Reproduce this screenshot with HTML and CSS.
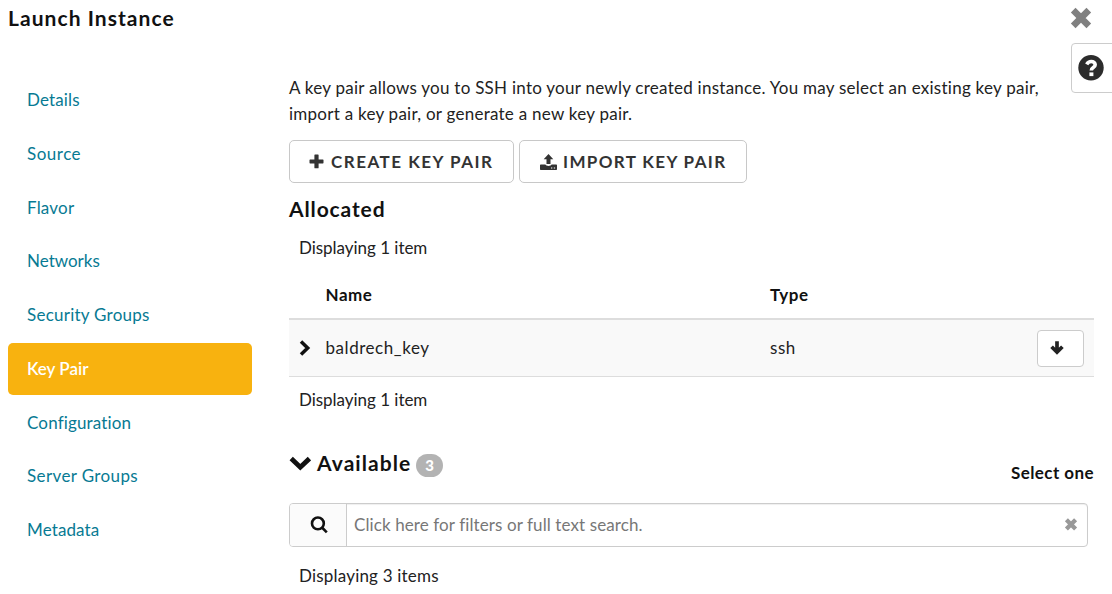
FILE: index.html
```html
<!DOCTYPE html>
<html lang="en">
<head>
<meta charset="utf-8">
<title>Launch Instance</title>
<link rel="stylesheet" href="styles.css">
</head>
<body>
<div class="wizard">
  <header class="header">
    <h1 class="title">Launch Instance</h1>
    <button class="close" aria-label="Close"><svg width="24" height="24" viewBox="0 0 24 24"><path d="M4.200 4.200 19.800 19.800M19.800 4.200 4.200 19.800"/></svg></button>
  </header>
  <div class="body">
    <nav class="steps">
      <a class="step s-details">Details</a>
      <a class="step s-source">Source</a>
      <a class="step s-flavor">Flavor</a>
      <a class="step">Networks</a>
      <a class="step s-security">Security Groups</a>
      <a class="step active">Key Pair</a>
      <a class="step s-config">Configuration</a>
      <a class="step s-server">Server Groups</a>
      <a class="step s-meta">Metadata</a>
    </nav>
    <main class="content">
      <p class="intro">A key pair allows you to SSH into your newly created instance. You may select an existing key pair,<br>import a key pair, or generate a new key pair.</p>
      <div class="actions">
        <button class="btn create"><svg width="15" height="15" viewBox="0 0 15 15"><path d="M6 .5h3q.6 0 .6.6v4.300h4.300q.6 0 .6.6v2.800q0 .6-.6.6H9.600v4.300q0 .6-.6.6H6q-.6 0-.6-.6V9.400H1.100q-.6 0-.6-.6V6q0-.6.6-.6h4.300V1.100q0-.6.6-.6z"/></svg><span>CREATE KEY PAIR</span></button>
        <button class="btn import"><svg width="17" height="16" viewBox="0 0 17 16"><path d="M8.500 0 13.300 5.200H10.500V9.900H6.500V5.200H3.700z"/><path fill-rule="evenodd" d="M.7 10.600H5.300Q6 12 8.500 12T11.700 10.600H16.300Q17 10.600 17 11.300V15.200Q17 15.900 16.300 15.900H.7Q0 15.900 0 15.200V11.300Q0 10.600.7 10.600zM11 13.400v1.200h1.300v-1.200zm2.800 0v1.200h1.300v-1.200z"/></svg><span>IMPORT KEY PAIR</span></button>
      </div>
      <h2 class="section">Allocated</h2>
      <p class="count">Displaying 1 item</p>
      <div class="table">
        <div class="row head"><span></span><span>Name</span><span>Type</span><span></span></div>
        <div class="row item">
          <svg class="chev" width="12" height="17" viewBox="0 0 12 17"><path d="M2 1.500 8.700 8 2 14.500"/></svg>
          <span class="key">baldrech_key</span><span class="key">ssh</span>
          <button class="down" aria-label="Move down"><svg width="14" height="14" viewBox="0 0 14 14"><path d="M7 .3V10.500M1.600 5.700 7 11.100 12.400 5.700"/></svg></button>
        </div>
      </div>
      <p class="count after">Displaying 1 item</p>
      <div class="available">
        <h2 class="avail-title"><svg width="22" height="16" viewBox="0 0 22 16"><path d="M2.200 3.600 11.300 12.200 20.400 3.600"/></svg><span>Available</span><span class="badge">3</span></h2>
        <span class="select">Select one</span>
      </div>
      <div class="search">
        <span class="lens"><svg width="18" height="18" viewBox="0 0 18 18"><circle cx="7.900" cy="7.400" r="5.900"/><path d="m12 11.500 4.800 4.800"/></svg></span>
        <span class="placeholder">Click here for filters or full text search.</span>
        <svg class="clear" width="14" height="14" viewBox="0 0 14 14"><path d="m2.400 1.800 9.200 9.200M11.600 1.800l-9.200 9.200"/></svg>
      </div>
      <p class="count last">Displaying 3 items</p>
    </main>
    <button class="help" aria-label="Help"><svg width="26" height="26" viewBox="0 0 26 26"><circle cx="13" cy="12.700" r="12.700"/><path d="M8.700 9.300Q10.300 6.500 13.200 6.500C15.500 6.500 17.200 7.900 17.200 9.800C17.200 12.800 13.300 12.400 13.300 15.500"/><rect x="11.400" y="17.400" width="4" height="3.700"/></svg></button>
  </div>
</div>
</body>
</html>
```
FILE: styles.css
```css
* { box-sizing: border-box; }
body {
  margin: 0;
  background: #fff;
  color: #222;
  font: 17px/26px Lato, "Open Sans", sans-serif;
  overflow: hidden;
}
h1, h2, p { margin: 0; }
button { font: inherit; color: inherit; padding: 0; background: #fff; }
svg { display: block; flex: none; }
.wizard { height: 594px; overflow: hidden; }

/* Header */
.header { display: flex; justify-content: space-between; height: 43px; padding: 6px 19px 0 8px; }
.title { font-size: 21px; line-height: 24px; font-weight: 700; color: #111; letter-spacing: 1.050px; }
.close { border: 0; height: 24px; }
.close svg { fill: none; stroke: #808080; stroke-width: 6.600; }

/* Step navigation */
.body { display: grid; grid-template-columns: 244px 842px 18px; padding-left: 8px; }
.steps { display: flex; flex-direction: column; gap: 1.750px; padding-top: 31px; }
.step { height: 52px; padding-left: 19px; line-height: 52px; color: #077a93; border-radius: 5px; }
.step.active { background: #f8b20f; color: #fff; font-weight: 600; }
.s-details { letter-spacing: .15px; }
.s-source { letter-spacing: .5px; }
.s-flavor { letter-spacing: .2px; }
.s-security { letter-spacing: .25px; }
.s-config { letter-spacing: .15px; }
.s-server { letter-spacing: .38px; }
.s-meta { letter-spacing: .12px; }

/* Main panel */
.content { margin-left: 37px; }
.intro { padding-top: 32px; white-space: nowrap; letter-spacing: .256px; }
.actions { display: flex; gap: 5px; margin-top: 13px; }
.btn {
  height: 43px; display: flex; align-items: center; gap: 6px; padding-left: 20px;
  border: 1px solid #c8c8c8; border-radius: 5px; color: #333;
  font-weight: 700; letter-spacing: 1.500px; white-space: nowrap;
}
.btn svg { fill: #333; }
.create { width: 225px; padding-left: 19px; gap: 7px; }
.import { width: 228px; letter-spacing: 1.360px; }
.section { margin-top: 12px; font-size: 21px; line-height: 28px; color: #111; letter-spacing: .88px; }
.count { padding-left: 10px; margin-top: 12px; white-space: nowrap; letter-spacing: -.03px; }
.table { margin-top: 11px; }
.row { display: grid; grid-template-columns: 36.500px 444.500px 267px 47px; align-items: center; }
.head { height: 48px; border-bottom: 2px solid #ddd; font-weight: 700; color: #111; letter-spacing: .5px; }
.item { height: 57px; border-bottom: 1px solid #ddd; background: #f9f9f9; }
.key { letter-spacing: .55px; }
.chev { margin-left: 10px; fill: none; stroke: #111; stroke-width: 3.500; }
.down { height: 37px; width: 47px; border: 1px solid #ccc; border-radius: 4px; padding-left: 12px; }
.down svg { fill: none; stroke: #222; stroke-width: 3.700; }
.after { margin-top: 10px; }

/* Available list */
.available { height: 90px; display: flex; justify-content: space-between; padding-top: 36px; }
.avail-title { display: flex; align-items: center; height: 28px; font-size: 21px; color: #111; letter-spacing: 1.050px; }
.avail-title svg { fill: none; stroke: #111; stroke-width: 4.800; margin-right: 6px; }
.badge { width: 27px; height: 23px; margin: 4px 0 0 5px; border-radius: 12px; background: #b3b3b3; color: #fff; font-size: 15px; line-height: 22px; text-align: center; letter-spacing: 0; font-weight: 900; }
.select { padding-top: 11px; font-weight: 700; color: #111; white-space: nowrap; letter-spacing: .43px; }
.search { width: 799px; height: 44px; display: flex; align-items: center; border: 1px solid #ccc; border-radius: 4px; box-shadow: inset 0 1px 1px #0001; overflow: hidden; }
.lens { width: 57px; height: 42px; padding: 12px 0 0 20px; border-right: 1px solid #ccc; background: #fbfbfb; }
.lens svg { fill: none; stroke: #111; stroke-width: 2.600; }
.placeholder { flex: 1; padding: 0 0 1px 7px; color: #777; white-space: nowrap; letter-spacing: .1px; }
.clear { fill: none; stroke: #999; stroke-width: 4.300; margin-right: 9px; }
.last { margin-top: 16px; letter-spacing: .2px; }

.help { width: 51px; height: 50px; margin-left: -23px; padding-left: 6px; border: 1px solid #ccc; border-radius: 4px; }
.help path { fill: none; stroke: #fff; stroke-width: 3.600; }
.help rect { fill: #fff; }
.help circle { fill: #2c2c2c; }
```
